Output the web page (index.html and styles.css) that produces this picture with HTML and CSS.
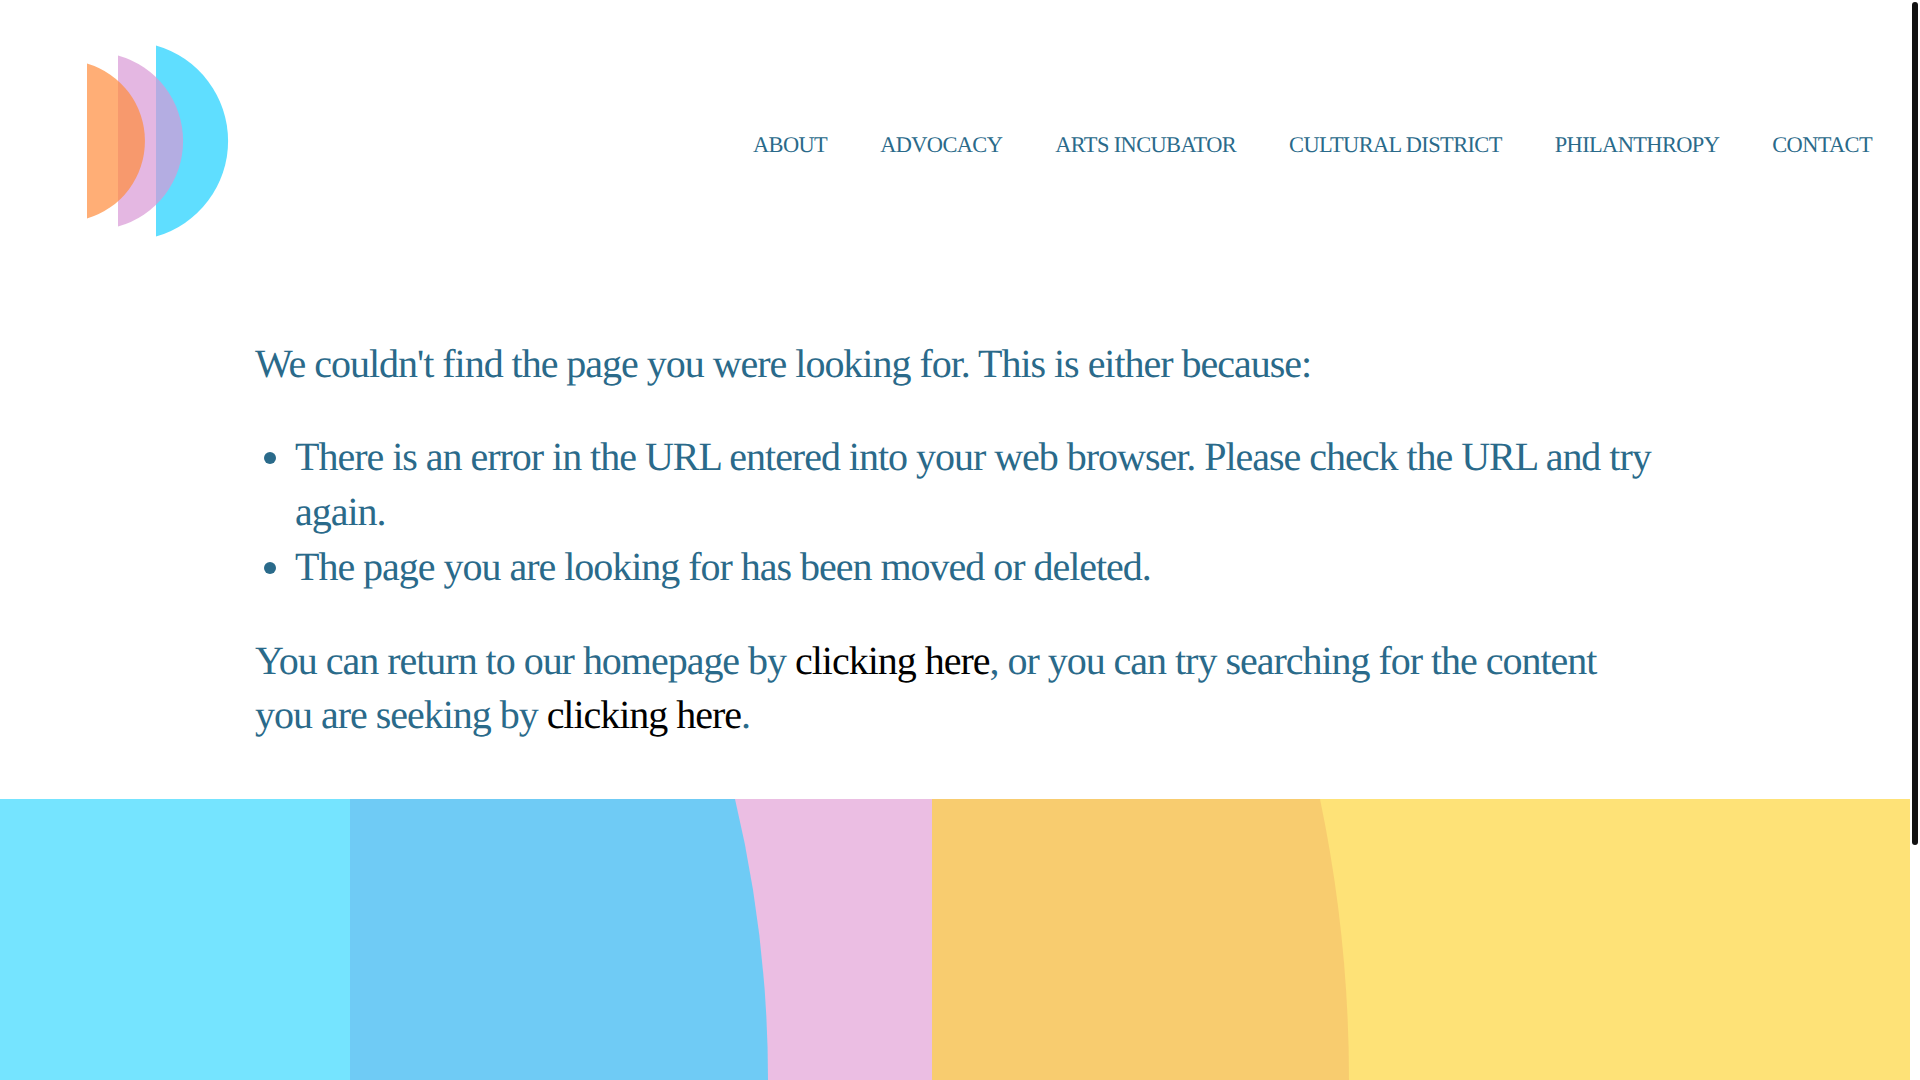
FILE: index.html
```html
<!DOCTYPE html>
<html lang="en">
<head>
<meta charset="utf-8">
<title>Page not found</title>
<link rel="stylesheet" href="styles.css">
</head>
<body>
<div class="page">
  <header class="header">
    <a class="logo" href="#" aria-label="Home">
      <svg width="160" height="192" viewBox="0 0 160 192">
        <path d="M69 0.5V191.5A99.3 99.3 0 0 0 69 0.5Z" fill="#5fdeff"/>
        <path d="M31 10.5V181.5A88.7 88.7 0 0 0 31 10.5Z" fill="#d998d6" fill-opacity=".7"/>
        <path d="M0 18.5V173.5A80.8 80.8 0 0 0 0 18.5Z" fill="#ff8c3c" fill-opacity=".7"/>
      </svg>
    </a>
    <nav class="nav">
      <a href="#">ABOUT</a>
      <a href="#">ADVOCACY</a>
      <a href="#">ARTS INCUBATOR</a>
      <a href="#">CULTURAL DISTRICT</a>
      <a href="#">PHILANTHROPY</a>
      <a href="#">CONTACT</a>
    </nav>
  </header>
  <main class="content">
    <p>We couldn't find the page you were looking for. This is either because:</p>
    <ul>
      <li>There is an error in the URL entered into your web browser. Please check the URL and try again.</li>
      <li>The page you are looking for has been moved or deleted.</li>
    </ul>
    <p class="last">You can return to our homepage by <a href="#">clicking here</a>, or you can try searching for the content you are seeking by <a href="#">clicking here</a>.</p>
  </main>
  <footer class="footer">
    <svg width="1910" height="281" viewBox="0 0 1910 281">
      <rect width="1910" height="281" fill="#75e4ff"/>
      <rect x="350" width="1560" height="281" fill="#ebbee3"/>
      <path d="M350 0H735A1213 1213 0 0 1 768 281H350Z" fill="#6fcbf5"/>
      <rect x="768" width="1142" height="281" fill="#ebbee3"/>
      <rect x="932" width="978" height="281" fill="#fee277"/>
      <path d="M932 0H1320A1376 1376 0 0 1 1349 281H932Z" fill="#f8cc6f"/>
    </svg>
  </footer>
</div>
<div class="scroll-thumb"></div>
</body>
</html>
```
FILE: styles.css
```css
html, body { margin: 0; padding: 0; background: #fff; overflow: hidden; }
body { height: 1080px; font-family: "Liberation Serif", "Times New Roman", serif; color: #2a6a8a; text-rendering: geometricPrecision; }
.page { width: 1910px; display: flex; flex-direction: column; height: 1080px; }
.header { display: flex; justify-content: space-between; align-items: center; height: 281px; padding: 0 38px 0 87px; box-sizing: border-box; }
.logo { display: block; height: 192px; }
.logo svg { display: block; }
.nav { display: flex; gap: 53px; padding-top: 8px; font-size: 22.4px; letter-spacing: -0.6px; }
.nav a { color: #2a6a8a; text-decoration: none; }
.content { padding: 55px 255px 0; font-size: 40px; line-height: 55px; letter-spacing: -1.02px; flex: 1; }
.content p { margin: 0; }
.content ul { margin: 38px 0 40px; padding: 0 0 0 40px; }
.content .last { line-height: 54px; }
.content a { color: #000; text-decoration: none; }
.footer { height: 281px; }
.footer svg { display: block; }
.scroll-thumb { position: fixed; top: 2px; left: 1912px; width: 6px; height: 843px; background: #111; border-radius: 3px; }
```
